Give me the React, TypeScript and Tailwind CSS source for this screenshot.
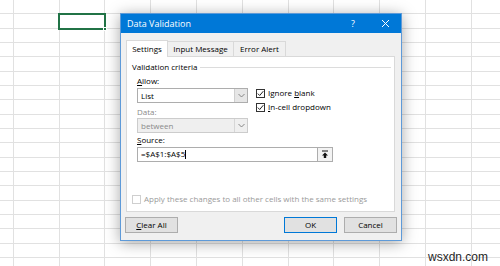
import React from 'react';

const font = { fontFamily: '"Open Sans", "Noto Sans", sans-serif' };

function Check({ on, disabled }: { on?: boolean; disabled?: boolean }) {
  return (
    <span className={`w-[9px] h-[9px] border ${disabled ? 'border-[#cfcfcf]' : 'border-[#333]'} bg-white flex items-center justify-center shrink-0`}>
      {on && (
        <svg width="7" height="7" viewBox="0 0 7 7">
          <path d="M0.8 3.6 L2.7 5.5 L6.3 1.2" fill="none" stroke="#222" strokeWidth="1" />
        </svg>
      )}
    </span>
  );
}

function Chevron({ color }: { color: string }) {
  return (
    <svg width="7" height="5" viewBox="0 0 7 5">
      <path d="M0.5 1 L3.5 4 L6.5 1" fill="none" stroke={color} strokeWidth="0.9" />
    </svg>
  );
}

function Select({ value, disabled }: { value: string; disabled?: boolean }) {
  return (
    <div className={`w-[111px] h-[15px] shrink-0 border ${disabled ? 'border-[#cccccc] bg-[#efefef] text-[#8a8a8a]' : 'border-[#adadad] bg-white text-black'} flex items-center`}>
      <span className="flex-1 pl-[3px] text-[8px] leading-none">{value}</span>
      <span className={`w-[13px] h-full border-l ${disabled ? 'border-[#d6d6d6]' : 'border-[#cfcfcf] bg-[#e6e6e6]'} flex items-center justify-center`}>
        <Chevron color="#7a7a7a" />
      </span>
    </div>
  );
}

function Btn({ label, primary }: { label: React.ReactNode; primary?: boolean }) {
  return (
    <div className={`w-[53px] h-[16px] bg-[#e1e1e1] border ${primary ? 'border-[#0078d7] border-[1.5px]' : 'border-[#adadad]'} flex items-center justify-center text-[8px] text-black leading-none`}>
      {label}
    </div>
  );
}

export default function App() {
  const cols = Array.from({ length: 12 });
  const rows = Array.from({ length: 19 });

  return (
    <div className="relative w-[500px] h-[266px] overflow-hidden bg-white" style={font}>
      {/* sheet grid */}
      <div className="-ml-[32px]">
        {rows.map((_, r) => (
          <div key={r} className="flex">
            {cols.map((_, c) => (
              <div key={c} className="w-[45.8px] h-[14.33px] shrink-0 border-r border-b border-[#e1e1e1]" />
            ))}
          </div>
        ))}
      </div>

      {/* selected cell */}
      <div className="absolute left-[58px] top-[13px] w-[48px] h-[17px] border-2 border-[#217346]">
        <div className="absolute -right-[3px] -bottom-[3px] w-[4px] h-[4px] bg-[#217346] border border-white" />
      </div>

      {/* dialog */}
      <div className="absolute left-[120px] top-[13px] w-[282px] h-[228px] border border-[#5e9ad8] bg-[#f0f0f0] shadow-[0_2px_14px_rgba(0,0,0,0.35)] flex flex-col">
        <div className="h-[19px] bg-[#0078d7] flex items-center pl-[6px] text-white shrink-0">
          <span className="text-[9px] leading-none">Data Validation</span>
          <span className="ml-auto text-[9px] leading-none mr-[26px]">?</span>
          <svg width="9" height="9" viewBox="0 0 9 9" className="mr-[11px]">
            <path d="M1 1 L8 8 M8 1 L1 8" stroke="white" strokeWidth="1" />
          </svg>
        </div>

        {/* tabs */}
        <div className="flex items-end h-[16px] mt-[7px] ml-[5px] relative z-10">
          <div className="h-[17px] -mb-px w-[42px] bg-white border border-b-0 border-[#d9d9d9] flex items-center justify-center text-[8px] leading-none text-black">Settings</div>
          <div className="h-[15px] w-[66px] border-t border-r border-[#d9d9d9] flex items-center justify-center text-[8px] leading-none text-black">Input Message</div>
          <div className="h-[15px] w-[52px] border-t border-r border-[#d9d9d9] flex items-center justify-center text-[8px] leading-none text-black">Error Alert</div>
        </div>

        {/* panel */}
        <div className="ml-[5px] w-[269px] h-[156px] bg-white border border-[#d9d9d9] flex flex-col text-[8px] leading-[10px] text-black">
          <div className="flex items-center mt-[5px] pl-[5px] pr-[3px]">
            <span>Validation criteria</span>
            <span className="flex-1 ml-[3px] border-t border-[#dcdcdc]" />
          </div>

          <div className="pl-[10px] flex flex-col">
            <span className="mt-[4px]"><u>A</u>llow:</span>
            <div className="flex items-start h-[15px] mt-[2px]">
              <Select value="List" />
              <div className="flex flex-col ml-[8px] gap-[4px]">
                <div className="flex items-center gap-[3px]"><Check on /><span>Ignore <u>b</u>lank</span></div>
                <div className="flex items-center gap-[3px]"><Check on /><span><u>I</u>n-cell dropdown</span></div>
              </div>
            </div>
            <span className="mt-[4px] text-[#8a8a8a]">Data:</span>
            <div className="mt-px">
              <Select value="between" disabled />
            </div>
            <span className="mt-[2px]"><u>S</u>ource:</span>
            <div className="mt-[2px] w-[196px] h-[15px] border border-[#adadad] flex items-center">
              <span className="flex-1 pl-[3px] leading-none">=$A$1:$A$5<span className="inline-block w-px h-[9px] bg-black align-middle -mt-[2px]" /></span>
              <span className="w-[15px] h-full border-l border-[#adadad] bg-[#f3f3f3] flex items-center justify-center">
                <svg width="8" height="9" viewBox="0 0 8 9">
                  <path d="M1 1 H7" stroke="#111" strokeWidth="1" />
                  <path d="M4 2.5 L1 5.5 H2.8 V8 H5.2 V5.5 H7 Z" fill="#111" />
                </svg>
              </span>
            </div>
          </div>

          <div className="mt-auto mb-[7px] ml-[5px] flex items-center gap-[3px] text-[#9a9a9a]">
            <Check disabled />
            <span>Apply these changes to all other cells with the same settings</span>
          </div>
        </div>

        {/* buttons */}
        <div className="flex mt-[5px] px-[4px]">
          <Btn label={<span><u>C</u>lear All</span>} />
          <div className="ml-auto flex gap-[7px]">
            <Btn label="OK" primary />
            <Btn label="Cancel" />
          </div>
        </div>
      </div>

      <span className="absolute right-[12px] bottom-[3px] text-[12px] leading-none text-[#1f1f1f]" style={{ fontFamily: '"Liberation Sans", Arial, sans-serif' }}>wsxdn.com</span>
    </div>
  );
}
